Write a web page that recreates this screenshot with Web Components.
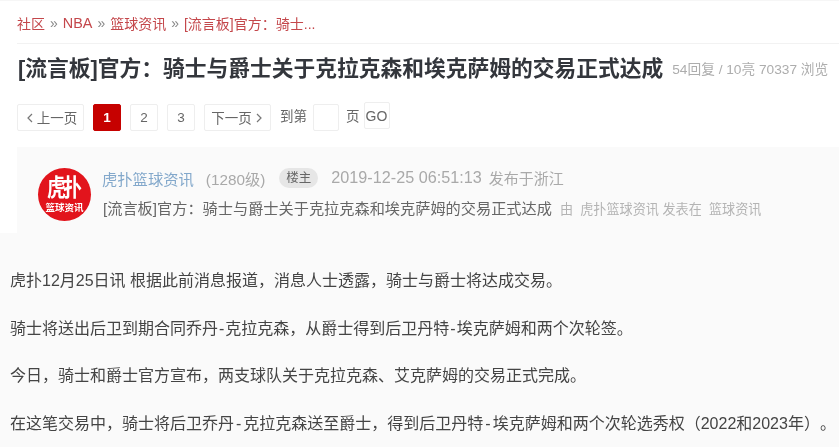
<!DOCTYPE html>
<html lang="zh">
<head>
<meta charset="utf-8">
<title>虎扑篮球资讯</title>
<style>
    html, body {
        margin: 0;
        height: 447px;
        overflow: hidden;
        background: #fafafa;
        font-family: "Liberation Sans", "Noto Sans CJK SC", sans-serif;
        text-spacing-trim: space-all;
    }
    /* the reference is a soft, slightly scaled-up capture */
    body { filter: blur(0.4px); }
    .dash { margin: 0 1px; }
    .dash.wide { margin: 0 2px; }
</style>
</head>
<body>
<hp-page>
    <hp-crumbs></hp-crumbs>
    <hp-title>
        [流言板]官方：骑士与爵士关于克拉克森和埃克萨姆的交易正式达成
        <span slot="stats">54回复 / 10亮 70337 浏览</span>
    </hp-title>
    <hp-pager></hp-pager>
    <hp-post-head></hp-post-head>
</hp-page>
<hp-article>
    <p>虎扑12月25日讯 根据此前消息报道，消息人士透露，骑士与爵士将达成交易。</p>
    <p>骑士将送出后卫到期合同乔丹<span class="dash">-</span>克拉克森，从爵士得到后卫丹特<span class="dash">-</span>埃克萨姆和两个次轮签。</p>
    <p>今日，骑士和爵士官方宣布，两支球队关于克拉克森、艾克萨姆的交易正式完成。</p>
    <p>在这笔交易中，骑士将后卫乔丹<span class="dash wide">-</span>克拉克森送至爵士，得到后卫丹特<span class="dash wide">-</span>埃克萨姆和两个次轮选秀权（2022和2023年）。</p>
</hp-article>
<script>
class HpPage extends HTMLElement {
    constructor() {
        super();
        this.attachShadow({ mode: 'open' });
        this.shadowRoot.innerHTML = `
            <style>
                :host {
                    display: block;
                    height: 233px;
                    box-sizing: border-box;
                    padding-left: 17px;
                    background: #fff;
                    border-top: 1px solid #f6f6f6;
                }
            </style>
            <slot></slot>
        `;
    }
}

class HpCrumbs extends HTMLElement {
    constructor() {
        super();
        this.attachShadow({ mode: 'open' });
        const items = ['社区', '<span class="l">NBA</span>', '篮球资讯', '[流言板]官方：骑士...'];
        this.shadowRoot.innerHTML = `
            <style>
                :host {
                    display: flex;
                    align-items: center;
                    padding-top: 1px;
                    box-sizing: border-box;
                    height: 43px;
                    border-bottom: 1px solid #f2f2f2;
                    font-size: 14px;
                    color: #c4474b;
                }
                i {
                    font-style: normal;
                    color: #888;
                    margin: 0 5px;
                    font-size: 14px;
                }
                .l { font-size: 14.4px; }
            </style>
            ${items.map(t => `<span>${t}</span>`).join('<i>»</i>')}
        `;
    }
}

class HpTitle extends HTMLElement {
    constructor() {
        super();
        this.attachShadow({ mode: 'open' });
        this.shadowRoot.innerHTML = `
            <style>
                :host {
                    display: flex;
                    align-items: center;
                    height: 43px;
                    margin-top: 1px;
                    padding-left: 1px;
                    white-space: nowrap;
                }
                h1 {
                    margin: 0;
                    font-size: 21.75px;
                    font-weight: 700;
                    color: #33363c;
                }
                div {
                    margin-left: 9px;
                    font-size: 13.7px;
                    color: #adadad;
                    padding-top: 2px;
                }
            </style>
            <h1><slot></slot></h1>
            <div><slot name="stats"></slot></div>
        `;
    }
}

class HpPager extends HTMLElement {
    constructor() {
        super();
        this.attachShadow({ mode: 'open' });
        this.shadowRoot.innerHTML = `
            <style>
                :host {
                    display: flex;
                    align-items: flex-start;
                    gap: 9px;
                    margin-top: 14px;
                    height: 27px;
                    font-size: 13.5px;
                    color: #666;
                }
                .b {
                    box-sizing: border-box;
                    display: flex;
                    align-items: center;
                    justify-content: center;
                    height: 27px;
                    min-width: 28px;
                    margin-top: 2px;
                    background: #fff;
                    border: 1px solid #eee;
                    border-radius: 2px;
                }
                .w { width: 67px; gap: 4px; padding-bottom: 2px; }
                .prev { padding-left: 3px; }
                .next { padding-right: 2px; }
                .cur {
                    background: #c60100;
                    border-color: #c60100;
                    color: #fff;
                    font-weight: 700;
                }
                .t { line-height: 25px; margin-top: 2px; }
                .in { width: 26px; min-width: 26px; margin: 2px -2px 0 -3px; }
                .go {
                    width: 26px;
                    min-width: 26px;
                    margin: 0 0 0 -5px;
                    font-size: 14px;
                }
                svg { width: 6px; height: 10px; margin-top: 2px; fill: none; stroke: #777; stroke-width: 1.2; }
            </style>
            <div class="b w prev"><svg viewBox="0 0 6 10"><path d="M5 1 1 5l4 4"/></svg>上一页</div>
            <div class="b cur">1</div>
            <div class="b">2</div>
            <div class="b">3</div>
            <div class="b w next">下一页<svg viewBox="0 0 6 10"><path d="M1 1l4 4-4 4"/></svg></div>
            <div class="t">到第</div>
            <div class="b in"></div>
            <div class="t">页</div>
            <div class="b go">GO</div>
        `;
    }
}

class HpAvatar extends HTMLElement {
    constructor() {
        super();
        this.attachShadow({ mode: 'open' });
        this.shadowRoot.innerHTML = `
            <style>
                :host {
                    display: flex;
                    flex: none;
                    flex-direction: column;
                    align-items: center;
                    justify-content: center;
                    width: 53px;
                    height: 53px;
                    margin-top: 8px;
                    border-radius: 50%;
                    background: #e2141c;
                    color: #fff;
                    white-space: nowrap;
                }
                b {
                    font-size: 19px;
                    line-height: 24px;
                    letter-spacing: -3px;
                    margin: 1px 3px 3px 0;
                    font-weight: 700;
                    transform: scaleY(1.25);
                }
                span {
                    font-size: 9.5px;
                    line-height: 10px;
                    font-weight: 700;
                }
            </style>
            <b>虎扑</b>
            <span>篮球资讯</span>
        `;
    }
}

class HpPostHead extends HTMLElement {
    constructor() {
        super();
        this.attachShadow({ mode: 'open' });
        this.shadowRoot.innerHTML = `
            <style>
                :host {
                    display: flex;
                    align-items: center;
                    gap: 11px;
                    height: 86px;
                    margin-top: 18px;
                    padding-left: 21px;
                    background: #fafafa;
                    white-space: nowrap;
                }
                .info { display: flex; flex-direction: column; gap: 8px; margin-top: 5px; }
                .top { display: flex; align-items: center; height: 20px; font-size: 15.3px; color: #a9a9a9; }
                .name { color: #83a8cb; }
                .lv { margin-left: 12px; }
                .tag {
                    margin-left: 14px;
                    padding: 0 7px;
                    border-radius: 10px;
                    background: #e6e6e6;
                    color: #666;
                    font-size: 12.5px;
                    line-height: 20px;
                }
                .time { margin-left: 13px; font-size: 16.2px; }
                .loc { margin-left: 7px; font-size: 15px; }
                .sub { display: flex; align-items: baseline; font-size: 15.2px; color: #666; margin-left: 1px; }
                .sub small { font-size: 13.1px; color: #b4b4b4; margin-left: 8px; }
            </style>
            <hp-avatar></hp-avatar>
            <div class="info">
                <div class="top">
                    <span class="name">虎扑篮球资讯</span>
                    <span class="lv">(1280级)</span>
                    <span class="tag">楼主</span>
                    <span class="time">2019-12-25 06:51:13</span>
                    <span class="loc">发布于浙江</span>
                </div>
                <div class="sub">[流言板]官方：骑士与爵士关于克拉克森和埃克萨姆的交易正式达成<small>由&nbsp; 虎扑篮球资讯 发表在&nbsp; 篮球资讯</small></div>
            </div>
        `;
    }
}

class HpArticle extends HTMLElement {
    constructor() {
        super();
        this.attachShadow({ mode: 'open' });
        this.shadowRoot.innerHTML = `
            <style>
                :host {
                    display: flex;
                    flex-direction: column;
                    gap: 26px;
                    padding: 37px 0 0 10px;
                    font-size: 16px;
                    line-height: 21.5px;
                    color: #444;
                    white-space: nowrap;
                }
                ::slotted(p) { margin: 0; }
            </style>
            <slot></slot>
        `;
    }
}

customElements.define('hp-page', HpPage);
customElements.define('hp-crumbs', HpCrumbs);
customElements.define('hp-title', HpTitle);
customElements.define('hp-pager', HpPager);
customElements.define('hp-avatar', HpAvatar);
customElements.define('hp-post-head', HpPostHead);
customElements.define('hp-article', HpArticle);
</script>
</body>
</html>
